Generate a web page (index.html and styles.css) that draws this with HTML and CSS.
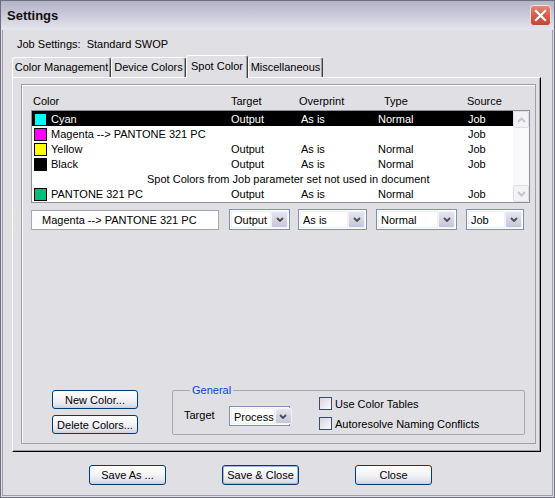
FILE: index.html
```html
<!DOCTYPE html>
<html lang="en">
<head>
    <meta charset="UTF-8">
    <title>Settings</title>
    <link rel="stylesheet" href="styles.css">
</head>
<body>
    <div class="window">
        <div class="titlebar">
            <span class="title">Settings</span>
            <span class="close-btn">
                <svg width="21" height="21" viewBox="0 0 21 21">
                    <defs>
                        <linearGradient id="redg" x1="0" y1="0" x2="0" y2="1">
                            <stop offset="0" stop-color="#e58a78"/>
                            <stop offset="0.5" stop-color="#d65c4b"/>
                            <stop offset="1" stop-color="#c24536"/>
                        </linearGradient>
                    </defs>
                    <rect x="0.5" y="0.5" width="20" height="20" rx="3" fill="url(#redg)" stroke="#f4e4e0"/>
                    <path d="M6 6 L15 15 M15 6 L6 15" stroke="#fff" stroke-width="2.2" stroke-linecap="square"/>
                </svg>
            </span>
        </div>

        <div class="client">
            <div class="job-settings">Job Settings:&nbsp;&nbsp;Standard SWOP</div>

            <div class="tabs">
                <div class="tab tab-cm">Color Management</div>
                <div class="tab tab-dc">Device Colors</div>
                <div class="tab tab-sc active">Spot Color</div>
                <div class="tab tab-misc">Miscellaneous</div>
            </div>

            <div class="tab-panel">
                <div class="group">
                    <div class="list-header">
                        <span>Color</span>
                        <span>Target</span>
                        <span>Overprint</span>
                        <span>Type</span>
                        <span>Source</span>
                    </div>

                    <div class="list">
                        <div class="rows">
                            <div class="row selected">
                                <span class="name"><i class="swatch cyan"></i>Cyan</span>
                                <span>Output</span><span>As is</span><span>Normal</span><span>Job</span>
                            </div>
                            <div class="row">
                                <span class="name"><i class="swatch magenta"></i>Magenta --&gt; PANTONE 321 PC</span>
                                <span></span><span></span><span></span><span>Job</span>
                            </div>
                            <div class="row">
                                <span class="name"><i class="swatch yellow"></i>Yellow</span>
                                <span>Output</span><span>As is</span><span>Normal</span><span>Job</span>
                            </div>
                            <div class="row">
                                <span class="name"><i class="swatch black"></i>Black</span>
                                <span>Output</span><span>As is</span><span>Normal</span><span>Job</span>
                            </div>
                            <div class="row-note">Spot Colors from Job parameter set not used in document</div>
                            <div class="row">
                                <span class="name"><i class="swatch pantone"></i>PANTONE 321 PC</span>
                                <span>Output</span><span>As is</span><span>Normal</span><span>Job</span>
                            </div>
                        </div>
                        <div class="scrollbar">
                            <div class="scroll-btn">
                                <svg width="9" height="6" viewBox="0 0 9 6"><path d="M1 5 L4.5 1.5 L8 5" fill="none" stroke="#c6c6d0" stroke-width="2"/></svg>
                            </div>
                            <div class="scroll-btn">
                                <svg width="9" height="6" viewBox="0 0 9 6"><path d="M1 1 L4.5 4.5 L8 1" fill="none" stroke="#c6c6d0" stroke-width="2"/></svg>
                            </div>
                        </div>
                    </div>

                    <div class="edit-row">
                        <div class="field">Magenta --&gt; PANTONE 321 PC</div>
                        <div class="combo combo-target">
                            <span class="combo-value">Output</span>
                            <span class="combo-btn"><svg width="8" height="5" viewBox="0 0 8 5"><path d="M1 1 L4 4 L7 1" fill="none" stroke="#4a4a5e" stroke-width="1.8"/></svg></span>
                        </div>
                        <div class="combo combo-overprint">
                            <span class="combo-value">As is</span>
                            <span class="combo-btn"><svg width="8" height="5" viewBox="0 0 8 5"><path d="M1 1 L4 4 L7 1" fill="none" stroke="#4a4a5e" stroke-width="1.8"/></svg></span>
                        </div>
                        <div class="combo combo-type">
                            <span class="combo-value">Normal</span>
                            <span class="combo-btn"><svg width="8" height="5" viewBox="0 0 8 5"><path d="M1 1 L4 4 L7 1" fill="none" stroke="#4a4a5e" stroke-width="1.8"/></svg></span>
                        </div>
                        <div class="combo combo-source">
                            <span class="combo-value">Job</span>
                            <span class="combo-btn"><svg width="8" height="5" viewBox="0 0 8 5"><path d="M1 1 L4 4 L7 1" fill="none" stroke="#4a4a5e" stroke-width="1.8"/></svg></span>
                        </div>
                    </div>

                    <div class="bottom">
                        <div class="side-buttons">
                            <button class="btn btn-side">New Color...</button>
                            <button class="btn btn-side">Delete Colors...</button>
                        </div>
                        <fieldset class="general">
                            <legend>General</legend>
                            <div class="general-row">
                                <span class="target-label">Target</span>
                                <div class="combo combo-process">
                                    <span class="combo-value">Process</span>
                                    <span class="combo-btn"><svg width="8" height="5" viewBox="0 0 8 5"><path d="M1 1 L4 4 L7 1" fill="none" stroke="#4a4a5e" stroke-width="1.8"/></svg></span>
                                </div>
                                <div class="checks">
                                    <label class="check-row"><i class="checkbox"></i>Use Color Tables</label>
                                    <label class="check-row"><i class="checkbox"></i>Autoresolve Naming Conflicts</label>
                                </div>
                            </div>
                        </fieldset>
                    </div>
                </div>
            </div>

            <div class="footer">
                <button class="btn btn-footer">Save As ...</button>
                <button class="btn btn-footer default">Save &amp; Close</button>
                <button class="btn btn-footer">Close</button>
            </div>
        </div>
    </div>
</body>
</html>
```

FILE: styles.css
```css
* {
    box-sizing: border-box;
}

body {
    margin: 0;
    font-family: "Liberation Sans", Arial, sans-serif;
    font-size: 11px;
    color: #000;
    background: #e0dfe3;
}

.window {
    width: 555px;
    height: 498px;
    border: 1px solid #6e6e80;
    background: #e0dfe3;
    display: flex;
    flex-direction: column;
}

/* title bar */
.titlebar {
    height: 29px;
    flex: none;
    display: flex;
    align-items: center;
    justify-content: space-between;
    padding: 0 3px 0 6px;
    background: linear-gradient(180deg, #b4b4c8 0%, #c3c3d4 35%, #d6d6e2 70%, #e6e6ee 100%);
}

.title {
    font-weight: bold;
    font-size: 13px;
    color: #111;
}

.close-btn {
    width: 21px;
    height: 21px;
    display: block;
}

.close-btn svg {
    display: block;
}

.client {
    flex: 1;
    margin: 0 1px 1px;
    border: 1px solid #9e9eb0;
    border-top: none;
    padding-top: 8px;
}

.job-settings {
    padding-left: 14px;
    height: 13px;
    line-height: 13px;
}

/* tabs */
.tabs {
    display: flex;
    align-items: flex-end;
    height: 22px;
    margin: 4px 0 0 9px;
}

.tab {
    height: 20px;
    border: 1px solid;
    border-color: #fff #404040 transparent #fff;
    border-bottom: none;
    box-shadow: inset -1px 0 #a0a0a0;
    border-radius: 3px 3px 0 0;
    text-align: center;
    line-height: 18px;
    background: #e0dfe3;
}

.tab-cm { width: 99px; }
.tab-dc { width: 75px; }
.tab-sc { width: 62px; }
.tab-misc { width: 75px; }

.tab.active {
    height: 23px;
    margin-bottom: -1px;
    line-height: 20px;
    position: relative;
    z-index: 1;
}

.tab-panel {
    margin-left: 9px;
    width: 529px;
    height: 375px;
    border: 1px solid;
    border-color: #fff #000 #000 #fff;
    box-shadow: inset -1px -1px #a0a0a0;
    padding: 6px 0 0 8px;
}

.group {
    width: 515px;
    height: 360px;
    border: 1px solid #a0a0a0;
    box-shadow: inset 1px 1px #fff;
    display: flex;
    flex-direction: column;
    padding: 9px 0 8px 9px;
}

/* list */
.list-header {
    display: grid;
    grid-template-columns: 198px 68px 85px 83px auto;
    padding-left: 2px;
    height: 16px;
    line-height: 15px;
}

.list {
    width: 499px;
    height: 93px;
    border: 1px solid #8f8f9a;
    background: #fff;
    display: flex;
}

.rows {
    flex: 1;
}

.row {
    display: grid;
    grid-template-columns: 199px 70px 77px 90px auto;
    height: 15px;
    line-height: 17px;
}

.row.selected {
    background: #000;
    color: #fff;
}

.name {
    display: flex;
    align-items: center;
    padding-left: 2px;
    white-space: nowrap;
}

.swatch {
    width: 13px;
    height: 13px;
    border: 1px solid #000;
    margin-right: 4px;
    flex: none;
}

.swatch.cyan { background: #00ffff; }
.swatch.magenta { background: #ff00ff; }
.swatch.yellow { background: #ffff00; }
.swatch.black { background: #000; }
.swatch.pantone { background: #00c07a; }

.row-note {
    height: 15px;
    line-height: 17px;
    padding-left: 115px;
    white-space: nowrap;
}

.scrollbar {
    width: 16px;
    display: flex;
    flex-direction: column;
    justify-content: space-between;
    background: #f9f9fb;
}

.scroll-btn {
    height: 17px;
    border: 1px solid #dedee6;
    border-radius: 2px;
    background: #f3f3f7;
    display: flex;
    align-items: center;
    justify-content: center;
}

/* edit row */
.edit-row {
    display: flex;
    align-items: center;
    height: 21px;
    margin-top: 6px;
}

.field {
    width: 188px;
    height: 20px;
    border: 1px solid #a3a7b6;
    background: #fff;
    padding-left: 10px;
    line-height: 18px;
}

.combo {
    height: 21px;
    border: 1px solid #7f90b0;
    background: #fff;
    display: flex;
    padding: 1px;
}

.combo-value {
    flex: 1;
    padding-left: 2px;
    line-height: 17px;
    border: 1px solid #f0f0f0;
    white-space: nowrap;
}

.combo-btn {
    width: 17px;
    flex: none;
    background: linear-gradient(180deg, #e6e6ee, #c6c6d6);
    border: 1px solid #f2f2f8;
    border-radius: 2px;
    display: flex;
    align-items: center;
    justify-content: center;
}

.combo-target { width: 61px; margin-left: 10px; }
.combo-overprint { width: 69px; margin-left: 8px; }
.combo-type { width: 81px; margin-left: 9px; }
.combo-source { width: 58px; margin-left: 9px; }
.combo-process { width: 61px; height: 20px; margin-top: 9px; }

/* bottom */
.bottom {
    margin-top: auto;
    display: flex;
    align-items: flex-end;
}

.side-buttons {
    display: flex;
    flex-direction: column;
    gap: 6px;
    margin: 0 0 1px 21px;
}

.btn {
    font-family: "Liberation Sans", Arial, sans-serif;
    font-size: 11px;
    color: #000;
    border: 1px solid #003c74;
    border-radius: 3px;
    background: linear-gradient(180deg, #ffffff 0%, #f4f4f8 45%, #e4e4ec 80%, #cfcfdc 100%);
    padding: 0;
    text-align: center;
}

.btn-side {
    width: 86px;
    height: 19px;
}

.general {
    margin: 0 0 0 34px;
    width: 353px;
    padding: 0 10px 4px 11px;
    border: 1px solid #a7a7b0;
    border-radius: 2px;
    min-width: 0;
}

.general legend {
    margin-left: 6px;
    padding: 0 2px;
    color: #0046d5;
    line-height: 13px;
}

.general-row {
    display: flex;
    align-items: flex-start;
}

.target-label {
    width: 45px;
    margin-top: 12px;
}

.checks {
    margin-left: 29px;
    display: flex;
    flex-direction: column;
    gap: 7px;
}

.check-row {
    display: flex;
    align-items: center;
    height: 13px;
}

.checkbox {
    width: 13px;
    height: 13px;
    border: 1px solid #3b4c6c;
    background: linear-gradient(135deg, #d6d6dc, #fcfcfc);
    margin-right: 3px;
}

/* footer */
.footer {
    display: flex;
    gap: 56px;
    padding-left: 86px;
    margin-top: 13px;
}

.btn-footer {
    width: 77px;
    height: 20px;
}

.btn-footer.default {
    box-shadow: inset 0 0 0 1px #9db6e6;
}
```
